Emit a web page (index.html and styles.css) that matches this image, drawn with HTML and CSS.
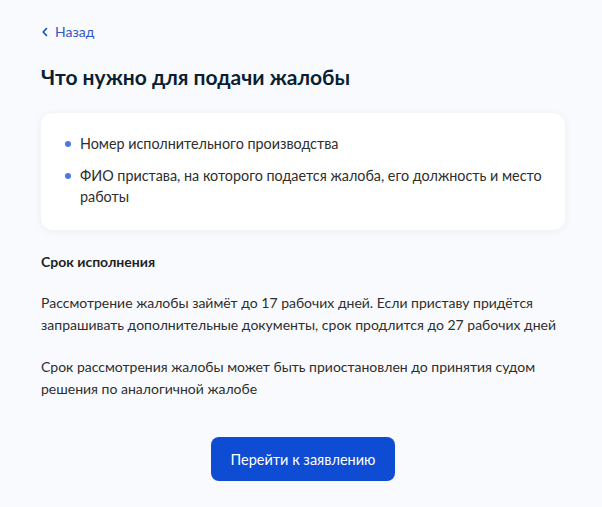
FILE: index.html
```html
<!DOCTYPE html>
<html lang="ru">
<head>
<meta charset="utf-8">
<link rel="stylesheet" href="styles.css">
</head>
<body>
<main class="page">
  <a class="back" href="#">
    <svg class="back-icon" width="8" height="10" viewBox="0 0 8 10"><path d="M5.5 1.5 L2.2 5 L5.5 8.5" fill="none" stroke="#0d4cd3" stroke-width="1.6" stroke-linecap="round" stroke-linejoin="round"/></svg>
    <span>Назад</span>
  </a>
  <h1 class="title">Что нужно для подачи жалобы</h1>
  <section class="card">
    <ul class="list">
      <li>Номер исполнительного производства</li>
      <li>ФИО пристава, на которого подается жалоба, его должность и место работы</li>
    </ul>
  </section>
  <h2 class="subtitle">Срок исполнения</h2>
  <p class="text text-first">Рассмотрение жалобы займёт до 17 рабочих дней. Если приставу придётся запрашивать дополнительные документы, срок продлится до 27 рабочих дней</p>
  <p class="text">Срок рассмотрения жалобы может быть приостановлен до принятия судом решения по аналогичной жалобе</p>
  <div class="actions">
    <button class="btn">Перейти к заявлению</button>
  </div>
</main>
</body>
</html>
```
FILE: styles.css
```css
html, body {
  margin: 0;
  padding: 0;
  background: #f9fafd;
}
body {
  font-family: Lato, "Noto Sans", sans-serif;
  color: #1f1f1f;
  width: 602px;
  height: 507px;
  overflow: hidden;
}
.page {
  padding: 22px 37px 0 41px;
  display: flex;
  flex-direction: column;
}
.back {
  display: flex;
  align-items: center;
  gap: 6px;
  color: #2f58c4;
  text-decoration: none;
  font-size: 14px;
  line-height: 20px;
}
.back-icon {
  display: block;
}
.title {
  margin: 21px 0 0;
  font-size: 21px;
  line-height: 28px;
  font-weight: 700;
  color: #0b1f33;
}
.card {
  margin-top: 22px;
  background: #fff;
  border-radius: 12px;
  box-shadow: 0 1px 8px rgba(20, 40, 90, 0.06);
  padding: 20px 20px 23px 24px;
}
.list {
  list-style: none;
  margin: 0;
  padding: 0;
  display: flex;
  flex-direction: column;
  gap: 11px;
}
.list li {
  position: relative;
  padding-left: 15px;
  font-size: 14.35px;
  line-height: 21px;
  color: #2e2e2e;
}
.list li::before {
  content: "";
  position: absolute;
  left: 0;
  top: 7.5px;
  width: 6px;
  height: 6px;
  border-radius: 50%;
  background: #4a78e3;
}
.subtitle {
  margin: 21px 0 0;
  font-size: 14px;
  line-height: 21px;
  font-weight: 700;
  color: #1f1f1f;
}
.text {
  margin: 21px 0 0;
  font-size: 14px;
  line-height: 21.5px;
  color: #2e2e2e;
}
.text-first {
  margin-top: 20px;
}
.actions {
  display: flex;
  justify-content: center;
  margin-top: 38px;
}
.btn {
  width: 184px;
  height: 44px;
  border: 0;
  border-radius: 8px;
  background: #0d4cd3;
  color: #fff;
  font-family: Lato, "Noto Sans", sans-serif;
  font-size: 14.5px;
  cursor: pointer;
}
```
